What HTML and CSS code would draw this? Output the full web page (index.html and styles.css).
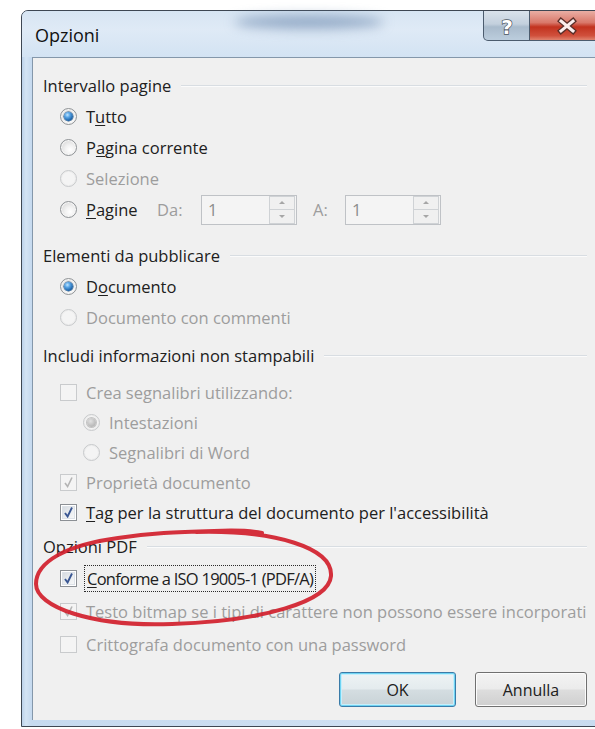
FILE: index.html
```html
<!DOCTYPE html>
<html lang="it">
<head>
<meta charset="utf-8">
<title>Opzioni</title>
<link rel="stylesheet" href="styles.css">
</head>
<body>
<div class="window">
  <div class="titlebar">
    <span class="title">Opzioni</span>
    <span class="glass-blur"></span>
    <div class="caption-buttons">
      <div class="cap-btn help">
        <svg width="20" height="24" viewBox="0 0 20 24"><text x="10" y="20" text-anchor="middle" class="help-glyph">?</text></svg>
      </div>
      <div class="cap-btn close">
        <svg width="22" height="18" viewBox="0 0 22 18">
          <path d="M5 4 L17 14 M17 4 L5 14" class="x-outline"/>
          <path d="M5 4 L17 14 M17 4 L5 14" class="x-fill"/>
        </svg>
      </div>
    </div>
  </div>

  <div class="client">
    <section class="group g1">
      <div class="heading">Intervallo pagine</div>
      <div class="opt"><span class="radio checked"></span><span>T<u>u</u>tto</span></div>
      <div class="opt"><span class="radio"></span><span>P<u>a</u>gina corrente</span></div>
      <div class="opt disabled"><span class="radio"></span><span>Selezione</span></div>
      <div class="opt">
        <span class="radio"></span><span class="pag-label"><u>P</u>agine</span>
        <span class="field-label da">Da:</span>
        <span class="spin"><span class="spin-value">1</span><span class="spin-btns"><span class="up"></span><span class="down"></span></span></span>
        <span class="field-label a">A:</span>
        <span class="spin"><span class="spin-value">1</span><span class="spin-btns"><span class="up"></span><span class="down"></span></span></span>
      </div>
    </section>

    <section class="group g2">
      <div class="heading">Elementi da pubblicare</div>
      <div class="opt"><span class="radio checked"></span><span>D<u>o</u>cumento</span></div>
      <div class="opt disabled"><span class="radio"></span><span>Documento con commenti</span></div>
    </section>

    <section class="group g3">
      <div class="heading">Includi informazioni non stampabili</div>
      <div class="opt first disabled"><span class="check"></span><span>Crea segnalibri utilizzando:</span></div>
      <div class="opt sub disabled"><span class="radio checked"></span><span>Intestazioni</span></div>
      <div class="opt sub disabled"><span class="radio"></span><span>Segnalibri di Word</span></div>
      <div class="opt disabled"><span class="check checked"></span><span>Proprietà documento</span></div>
      <div class="opt"><span class="check checked"></span><span><u>T</u>ag per la struttura del documento per l'accessibilità</span></div>
    </section>

    <section class="group g4">
      <div class="heading">Opzioni PDF</div>
      <div class="opt"><span class="check checked"></span><span class="focus"><u>C</u>onforme a ISO 19005-1 (PDF/A)</span></div>
      <div class="opt disabled"><span class="check checked"></span><span>Testo bitmap se i tipi di carattere non possono essere incorporati</span></div>
      <div class="opt disabled"><span class="check"></span><span>Crittografa documento con una password</span></div>
    </section>

    <div class="actions">
      <button class="btn default">OK</button>
      <button class="btn">Annulla</button>
    </div>
  </div>
</div>

<svg class="mark" width="595" height="729" viewBox="0 0 595 729">
  <path class="mark-ring" d="M196 532 C276 530 333 548 331 576 C329 602 262 621 172 624 C92 627 36 607 36 584 C36 562 66 545 118 538 C150 533 176 532 214 531 C236 530 252 531 262 533"/>
</svg>
</body>
</html>
```
FILE: styles.css
```css
html, body {
  margin: 0;
  padding: 0;
  width: 595px;
  height: 729px;
  overflow: hidden;
  background: #ffffff;
}

body {
  position: relative;
  font-family: "Open Sans", "Noto Sans", "Liberation Sans", sans-serif;
  font-size: 16.5px;
  color: #202020;
}

/* ---- window frame ---- */
.window {
  margin: 10px 0 0 21px;
  width: 590px;
  height: 715px;
  border: 1px solid #3e4753;
  border-top-left-radius: 7px;
  border-top-right-radius: 7px;
  background: linear-gradient(90deg, #bcd2ea 0, #d4e4f4 4px, #c6daef 9px, #cfe0f2 60%, #c8dbef 100%);
  display: flex;
  flex-direction: column;
}

.titlebar {
  position: relative;
  height: 46px;
  display: flex;
  align-items: flex-start;
  background: linear-gradient(180deg, #d7e5f3 0, #dfeaf6 40%, #d3e3f3 100%);
  border-top-left-radius: 6px;
  border-top-right-radius: 6px;
}

.title {
  margin: 12px 0 0 13px;
  font-size: 18px;
  color: #111;
}

.glass-blur {
  position: absolute;
  left: 212px;
  top: 4px;
  width: 150px;
  height: 14px;
  border-radius: 50%;
  background: rgba(100, 130, 168, 0.6);
  filter: blur(6px);
}

.caption-buttons {
  margin-left: auto;
  margin-right: 8px;
  display: flex;
  position: relative;
}

.cap-btn {
  height: 29px;
  display: flex;
  align-items: center;
  justify-content: center;
  border: 1px solid #4c5c6e;
  border-top: none;
}

.help {
  width: 45px;
  border-bottom-left-radius: 5px;
  background: linear-gradient(180deg, #d9e2eb 0, #c3d0dd 45%, #a9bbcc 55%, #bccddd 100%);
}

.close {
  width: 73px;
  border-left: none;
  border-bottom-right-radius: 5px;
  background: linear-gradient(180deg, #e9aea4 0, #d9786a 40%, #c2321f 55%, #d0503c 85%, #e0836f 100%);
}

.help-glyph {
  font-family: "DejaVu Sans", sans-serif;
  font-size: 20px;
  font-weight: bold;
  fill: #ffffff;
  stroke: #4a5560;
  stroke-width: 1.4px;
  paint-order: stroke;
}

.x-outline {
  stroke: #5a2f2a;
  stroke-width: 5.6;
  stroke-linecap: square;
  fill: none;
}

.x-fill {
  stroke: #fbeeee;
  stroke-width: 3;
  stroke-linecap: square;
  fill: none;
}

/* ---- client area ---- */
.client {
  flex: 1;
  margin: 0 10px 6px 10px;
  border-left: 1px solid #8497aa;
  border-top: 1px solid #8497aa;
  background: #f0f0f0;
  padding: 12px 15px 0 10px;
  display: flex;
  flex-direction: column;
}

.heading {
  height: 31px;
  display: flex;
  align-items: center;
  gap: 10px;
  color: #202020;
}

.heading::after {
  content: "";
  flex: 1;
  height: 1px;
  background: #d8dde2;
  border-bottom: 1px solid #fbfbfb;
}

.opt {
  height: 31px;
  display: flex;
  align-items: center;
  gap: 9px;
  padding-left: 17px;
  white-space: nowrap;
}

.opt u { text-decoration-thickness: 1px; text-underline-offset: 2px; }

.opt.disabled { color: #9d9d9d; }

.g2 { margin-top: 15px; }
.g3 { margin-top: 7px; }
.g3 .opt { height: 30px; }
.g3 .opt.first { margin-top: 6px; }
.g3 .opt.sub { padding-left: 40px; }
.g4 { margin-top: 4px; }
.g4 .opt { height: 33px; }

/* radio buttons */
.radio {
  position: relative;
  flex: none;
  width: 15px;
  height: 15px;
  border-radius: 50%;
  border: 1px solid #8f9396;
  background: radial-gradient(circle at 60% 65%, #ffffff 0, #f2f2f2 35%, #dcdcdc 75%, #cfcfcf 100%);
  box-shadow: inset 0 0 0 1px #f6f6f6;
}

.radio.checked::after {
  content: "";
  position: absolute;
  left: 3px;
  top: 3px;
  width: 9px;
  height: 9px;
  border-radius: 50%;
  background: radial-gradient(circle at 38% 32%, #bfe6ff 0, #5aa6e6 30%, #2168ad 65%, #12416f 100%);
  box-shadow: 0 0 0 0.5px #1c4b7a;
}

.disabled .radio {
  border-color: #c7c9cb;
  background: #f4f4f4;
  box-shadow: inset 0 0 0 1px #ededed;
}

.disabled .radio.checked::after {
  background: radial-gradient(circle at 40% 35%, #e2e2e2 0, #bdbdbd 60%, #a9a9a9 100%);
  box-shadow: 0 0 0 1px #c4c4c4;
}

/* check boxes */
.check {
  position: relative;
  flex: none;
  width: 15px;
  height: 15px;
  border: 1px solid #8c9095;
  background: linear-gradient(135deg, #cfd5dc 0, #e9ecef 50%, #fafafa 100%);
  box-shadow: inset 0 0 0 1px #ffffff, inset 0 0 0 2px #dde2e8;
}

.check.checked::after {
  content: "";
  position: absolute;
  left: 3px;
  top: 1px;
  width: 9px;
  height: 12px;
  background: no-repeat center / contain url("data:image/svg+xml;utf8,<svg xmlns='http://www.w3.org/2000/svg' viewBox='0 0 9 12'><path d='M1 7 L3.6 10.5 L8 1.5' fill='none' stroke='%233a5793' stroke-width='1.9'/></svg>");
}

.disabled .check {
  border-color: #c9cbcd;
  background: #f4f4f4;
  box-shadow: none;
}

.disabled .check.checked::after {
  background-image: url("data:image/svg+xml;utf8,<svg xmlns='http://www.w3.org/2000/svg' viewBox='0 0 9 12'><path d='M1 7 L3.6 10.5 L8 1.5' fill='none' stroke='%23b4b4b4' stroke-width='1.6'/></svg>");
}

.focus {
  outline: 1px dotted #2a2a2a;
  outline-offset: 1px;
  padding: 0 1px;
  letter-spacing: -0.75px;
}

/* page range fields */
.pag-label { width: 62px; }

.field-label {
  color: #9d9d9d;
}

.field-label.da { width: 35px; }
.field-label.a { margin-left: 7px; width: 23px; }

.spin {
  flex: none;
  width: 94px;
  height: 28px;
  border: 1px solid #bfc2c6;
  background: #f4f4f4;
  display: flex;
  align-items: center;
  justify-content: space-between;
  box-sizing: content-box;
}

.spin-value {
  margin-left: 6px;
  color: #8c8c8c;
}

.spin-btns {
  width: 24px;
  height: 26px;
  margin-right: 1px;
  display: flex;
  flex-direction: column;
  border: 1px solid #cfd2d5;
}

.spin-btns span {
  flex: 1;
  position: relative;
  background: #f0f0f0;
}

.spin-btns .up { border-bottom: 1px solid #cfd2d5; }

.spin-btns span::after {
  content: "";
  position: absolute;
  left: 9px;
  top: 4px;
  border-left: 3px solid transparent;
  border-right: 3px solid transparent;
}

.spin-btns .up::after { border-bottom: 3px solid #a6a6a6; }
.spin-btns .down::after { border-top: 3px solid #a6a6a6; top: 5px; }

/* dialog buttons */
.actions {
  margin-top: 11px;
  display: flex;
  justify-content: flex-end;
  gap: 19px;
}

.btn {
  height: 35px;
  font-family: inherit;
  font-size: 16px;
  color: #202020;
  border-radius: 3px;
  border: 1px solid #707070;
  background: linear-gradient(180deg, #f3f3f3 0, #ebebeb 48%, #dddddd 52%, #cfcfcf 100%);
  box-shadow: inset 0 0 0 1px #fcfcfc;
  padding: 0;
}

.btn.default {
  width: 117px;
  border-color: #3a7ba8;
  box-shadow: inset 0 0 0 1px #6fd4f3, inset 0 0 0 2px #c6eefb;
  background: linear-gradient(180deg, #eef3f5 0, #e4ebee 48%, #d4dde1 52%, #c8d2d6 100%);
}

.btn:not(.default) { width: 112px; }

/* hand-drawn highlight ring */
.mark {
  position: absolute;
  left: 0;
  top: 0;
  pointer-events: none;
}

.mark-ring {
  fill: none;
  stroke: #d11f2c;
  stroke-width: 4;
  stroke-linecap: round;
  opacity: 0.92;
}
```
